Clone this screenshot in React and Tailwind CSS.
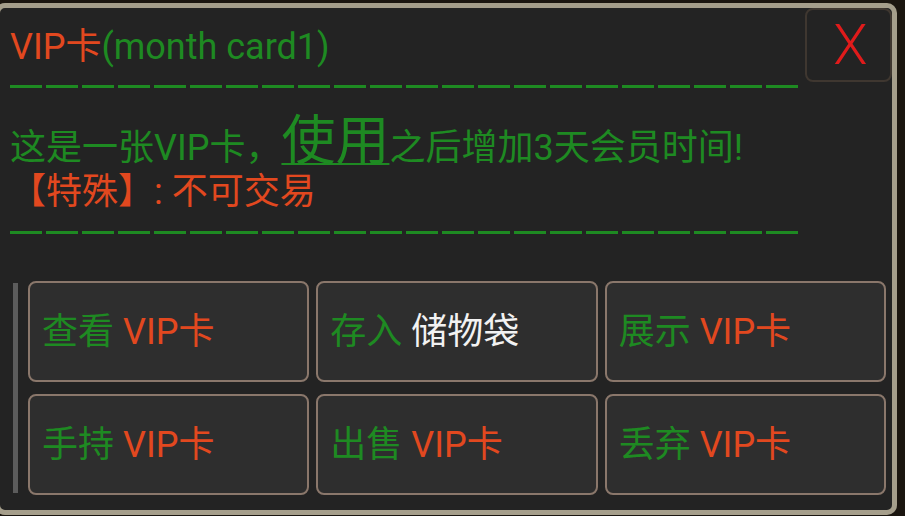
import React from 'react';

const font = { fontFamily: 'Roboto, "Noto Sans CJK SC", sans-serif' };

function Dashes() {
  return (
    <div className="flex gap-[4px] h-[3px]">
      {Array.from({ length: 22 }).map((_, i) => (
        <div key={i} className="w-[32px] h-[3px] bg-[#1e8a22]" />
      ))}
    </div>
  );
}

const actions = [
  { verb: '查看', obj: 'VIP卡' },
  { verb: '存入', obj: '储物袋', white: true },
  { verb: '展示', obj: 'VIP卡' },
  { verb: '手持', obj: 'VIP卡' },
  { verb: '出售', obj: 'VIP卡' },
  { verb: '丢弃', obj: 'VIP卡' },
];

export default function App() {
  return (
    <div className="w-[905px] h-[516px] bg-[#1b1610] overflow-hidden pt-[3px]" style={font}>
      <div className="w-[902px] h-[512px] -ml-[5px] border-[5px] border-[#a59e8b] rounded-[10px] bg-[#232323] flex flex-col">
        <div className="flex">
          <div className="flex-1 pl-[10px] pt-[17px]">
            <div className="h-[44px] leading-[44px] text-[36px] whitespace-nowrap">
              <span className="text-[#e2481f]">VIP卡</span>
              <span className="text-[#1e8a22]">(month card1)</span>
            </div>
            <div className="mt-[16px]">
              <Dashes />
            </div>
            <div className="mt-[32px] leading-[44px] text-[36px] text-[#1e8a22] whitespace-nowrap">
              这是一张VIP卡，
              <span className="text-[54px] leading-[44px] underline decoration-2 underline-offset-[3px]">使用</span>
              之后增加3天会员时间!
            </div>
            <div className="h-[44px] leading-[44px] text-[36px] text-[#e2481f] whitespace-nowrap">
              【特殊】: 不可交易
            </div>
            <div className="mt-[17px]">
              <Dashes />
            </div>
          </div>
          <div className="w-[87px] h-[74px] shrink-0 border-2 border-[#3f3730] rounded-[8px] flex items-center justify-center pl-[4px]">
            <span className="text-[56px] font-light leading-none text-[#e01b1b]">X</span>
          </div>
        </div>
        <div className="flex mt-[47px] pr-[6px]">
          <div className="ml-[13px] w-[5px] my-[2px] bg-[#5c5c5c]" />
          <div className="ml-[10px] flex-1 grid grid-cols-3 gap-x-[7px] gap-y-[12px]">
            {actions.map((a, i) => (
              <div
                key={i}
                className="h-[101px] border-2 border-[#8a776b] rounded-[8px] bg-[#2e2e2e] flex items-center pl-[12px] text-[36px] whitespace-nowrap"
              >
                <span className="text-[#1e8a22]">{a.verb}</span>
                <span className={a.white ? 'ml-[9px] text-[#f2f2f2]' : 'ml-[9px] text-[#e2481f]'}>{a.obj}</span>
              </div>
            ))}
          </div>
        </div>
      </div>
    </div>
  );
}
